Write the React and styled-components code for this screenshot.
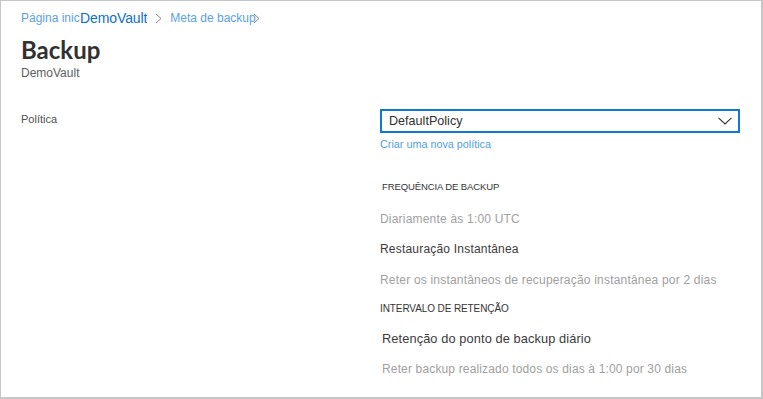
import React from 'react';
import styled, { createGlobalStyle } from 'styled-components';

const Global = createGlobalStyle`
	html, body {
		margin: 0;
		padding: 0;
		background: #ffffff;
	}
	body {
		font-family: "Liberation Sans", Arial, sans-serif;
	}
`;

const Frame = styled.div`
	box-sizing: border-box;
	width: 763px;
	height: 399px;
	border: 1px solid #c6c6c6;
	border-right-width: 2px;
	border-bottom-width: 2px;
	padding: 8px 0 0 20px;
	background: #ffffff;
	overflow: hidden;
`;

const Crumbs = styled.nav`
	display: flex;
	align-items: center;
	height: 18px;
	font-size: 12px;
	white-space: nowrap;
`;

const Crumb = styled.span`
	color: ${p => (p.$strong ? '#0f6fc6' : '#5aa2e0')};
	font-size: ${p => (p.$strong ? '14px' : '12px')};
	overflow: hidden;
	max-width: ${p => p.$clip || 'none'};
	letter-spacing: ${p => (p.$strong ? '-0.1px' : '0')};
`;

const Sep = styled.span`
	display: inline-flex;
	margin: ${p => p.$margin || '0 8px'};
	color: #8a8886;
`;

const Title = styled.h1`
	margin: 9px 0 0 0;
	font-family: Lato, "Liberation Sans", sans-serif;
	font-weight: 700;
	font-size: 24px;
	line-height: 28px;
	color: #323130;
`;

const Subtitle = styled.div`
	margin-top: 2px;
	font-size: 12px;
	color: #605e5c;
`;

const FormRow = styled.div`
	display: grid;
	grid-template-columns: 359px 360px;
	margin-top: 30px;
`;

const Label = styled.div`
	padding-top: 3px;
	font-size: 11px;
	color: #505050;
`;

const Control = styled.div`
	display: flex;
	flex-direction: column;
`;

const Select = styled.div`
	box-sizing: border-box;
	height: 24px;
	margin-top: -1px;
	border: 2px solid #0f78d4;
	display: flex;
	align-items: center;
	justify-content: space-between;
	padding: 0 6px 0 7px;
	font-size: 12.6px;
	color: #323130;
`;

const Link = styled.a`
	margin-top: 5px;
	font-size: 10.8px;
	color: #4f9fdf;
	text-decoration: none;
`;

const Heading = styled.div`
	margin-top: ${p => p.$top || '18px'};
	padding-left: ${p => p.$indent || '2px'};
	font-size: ${p => p.$size || '9.5px'};
	color: #333333;
	text-transform: uppercase;
	letter-spacing: -0.1px;
`;

const Line = styled.div`
	margin-top: ${p => p.$top || '16px'};
	padding-left: ${p => p.$indent || '0'};
	font-size: ${p => p.$size || '12px'};
	line-height: 14px;
	letter-spacing: ${p => p.$spacing || '0.2px'};
	color: ${p => (p.$muted ? '#a0a0a0' : '#3b3b3b')};
	white-space: nowrap;
`;

const Chevron = () => (
	<svg width="14" height="8" viewBox="0 0 14 8">
		<path d="M0.5 0.8 L7 7 L13.5 0.8" fill="none" stroke="#333" strokeWidth="1.1" />
	</svg>
);

const Small = () => (
	<svg width="7" height="11" viewBox="0 0 7 11">
		<path d="M1 1 L6 5.5 L1 10" fill="none" stroke="#8a8886" strokeWidth="1" />
	</svg>
);

const App = () => (
	<>
		<Global />
		<Frame>
			<Crumbs>
				<Crumb $clip="59px">Página inicial</Crumb>
				<Crumb $strong>DemoVault</Crumb>
				<Sep><Small /></Sep>
				<Crumb>Meta de backup</Crumb>
				<Sep $margin="0 0 0 -3px"><Small /></Sep>
			</Crumbs>
			<Title>Backup</Title>
			<Subtitle>DemoVault</Subtitle>
			<FormRow>
				<Label>Política</Label>
				<Control>
					<Select>
						<span>DefaultPolicy</span>
						<Chevron />
					</Select>
					<Link href="#">Criar uma nova política</Link>
					<Heading $top="31px" $indent="2px">Frequência de backup</Heading>
					<Line $muted $top="20px">Diariamente às 1:00 UTC</Line>
					<Line $top="16px">Restauração Instantânea</Line>
					<Line $muted $top="17px">Reter os instantâneos de recuperação instantânea por 2 dias</Line>
					<Heading $top="16px" $indent="0" $size="10px">Intervalo de retenção</Heading>
					<Line $top="18px" $indent="2px" $size="12.8px" $spacing="0.1px">Retenção do ponto de backup diário</Line>
					<Line $muted $top="16px" $indent="2px" $spacing="0.15px">Reter backup realizado todos os dias à 1:00 por 30 dias</Line>
				</Control>
			</FormRow>
		</Frame>
	</>
);

export default App;
